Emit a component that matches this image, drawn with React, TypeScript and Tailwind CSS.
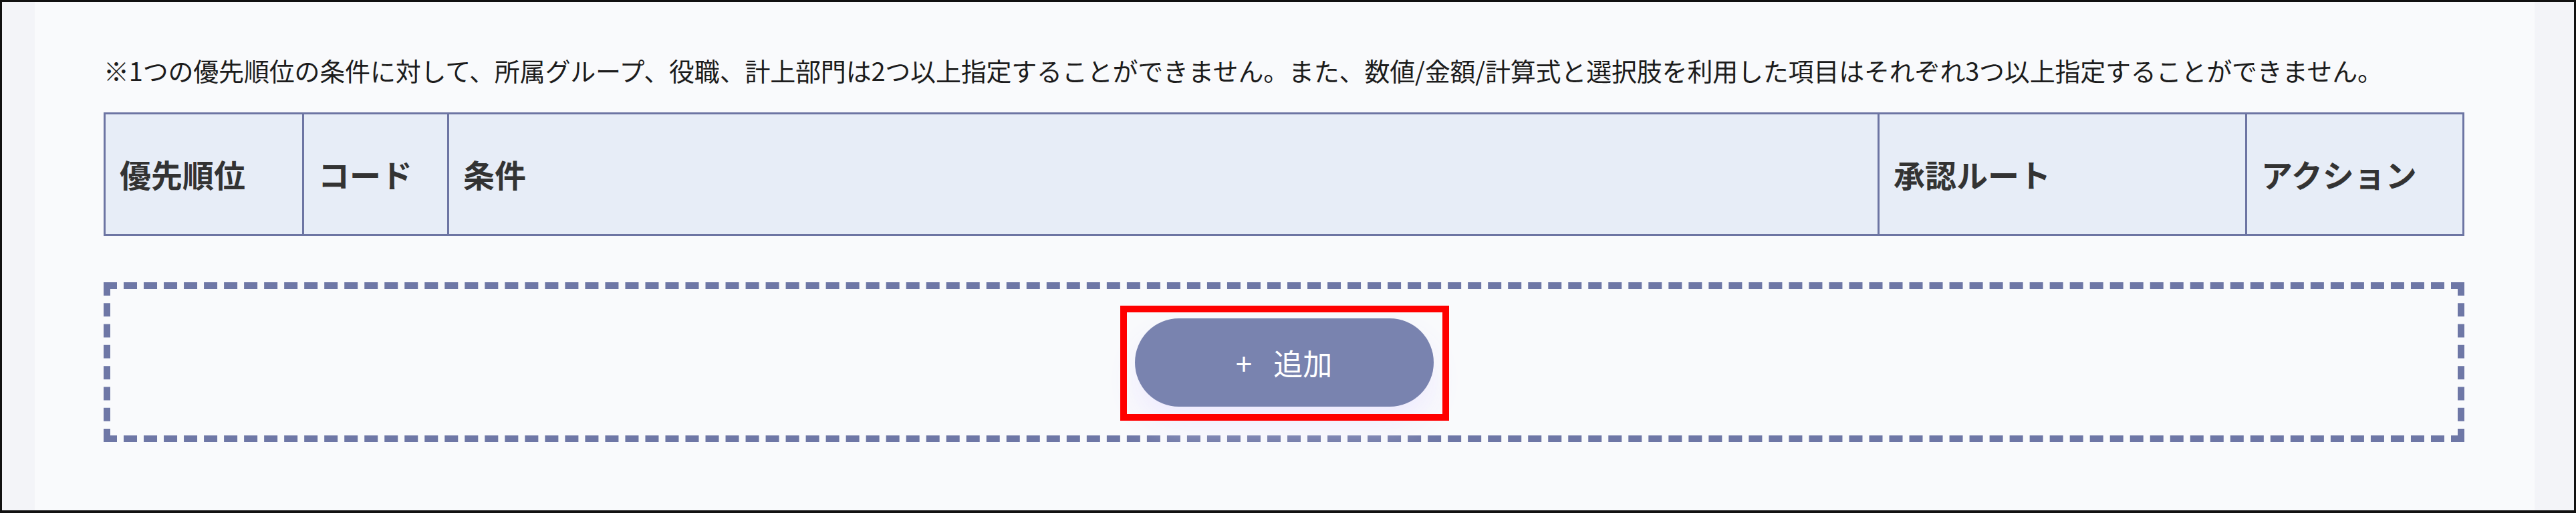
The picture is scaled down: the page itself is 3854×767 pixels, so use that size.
const headers = [
  { label: "優先順位", width: "w-[294px]" },
  { label: "コード", width: "w-[217px]" },
  { label: "条件", width: "flex-1" },
  { label: "承認ルート", width: "w-[550px]" },
  { label: "アクション", width: "w-[325px]" },
];

function AddButton() {
  return (
    <div className="relative">
      <button
        type="button"
        className="flex h-[132px] w-[447px] items-center justify-center gap-[32px] rounded-full bg-[#7983af] text-[44px] text-white shadow-[0_26px_50px_-6px_rgba(236,232,255,0.95)]"
      >
        <span>+</span>
        <span>追加</span>
      </button>
      {/* annotation frame drawn over the button */}
      <div className="pointer-events-none absolute -top-[19px] -bottom-[21px] -left-[22px] -right-[23px] border-[10px] border-[#ff0000]" />
    </div>
  );
}

export default function App() {
  return (
    <div
      className="flex h-[767px] w-[3854px] border-[3px] border-b-[4px] border-[#111111] bg-[#f3f4f8] text-[#222222]"
      style={{ fontFamily: '"Noto Sans CJK JP", "Noto Sans", sans-serif' }}
    >
      <div className="w-[49px] shrink-0" />
      <main className="flex-1 bg-[#f9fafc] pl-[103px] pr-[105px] pt-[74px]">
        <p className="text-[38px] leading-[56px] tracking-[-0.2px] text-[#1c1c1c]">
          ※1つの優先順位の条件に対して、所属グループ、役職、計上部門は2つ以上指定することができません。また、数値/金額/計算式と選択肢を利用した項目はそれぞれ3つ以上指定することができません。
        </p>

        <div className="mt-[35px] flex h-[185px] border-[3px] border-[#6d75a3] bg-[#e7edf7]">
          {headers.map((h, i) => (
            <div
              key={h.label}
              className={`${h.width} flex items-center pl-[21px] text-[47px] font-bold text-[#333333] ${
                i > 0 ? "border-l-[3px] border-[#6d75a3]" : ""
              }`}
            >
              {h.label}
            </div>
          ))}
        </div>

        <div className="mt-[69px] flex h-[239px] items-center justify-center border-[10px] border-dashed border-[#6e77a6]">
          <AddButton />
        </div>
      </main>
      <div className="w-[59px] shrink-0" />
    </div>
  );
}
